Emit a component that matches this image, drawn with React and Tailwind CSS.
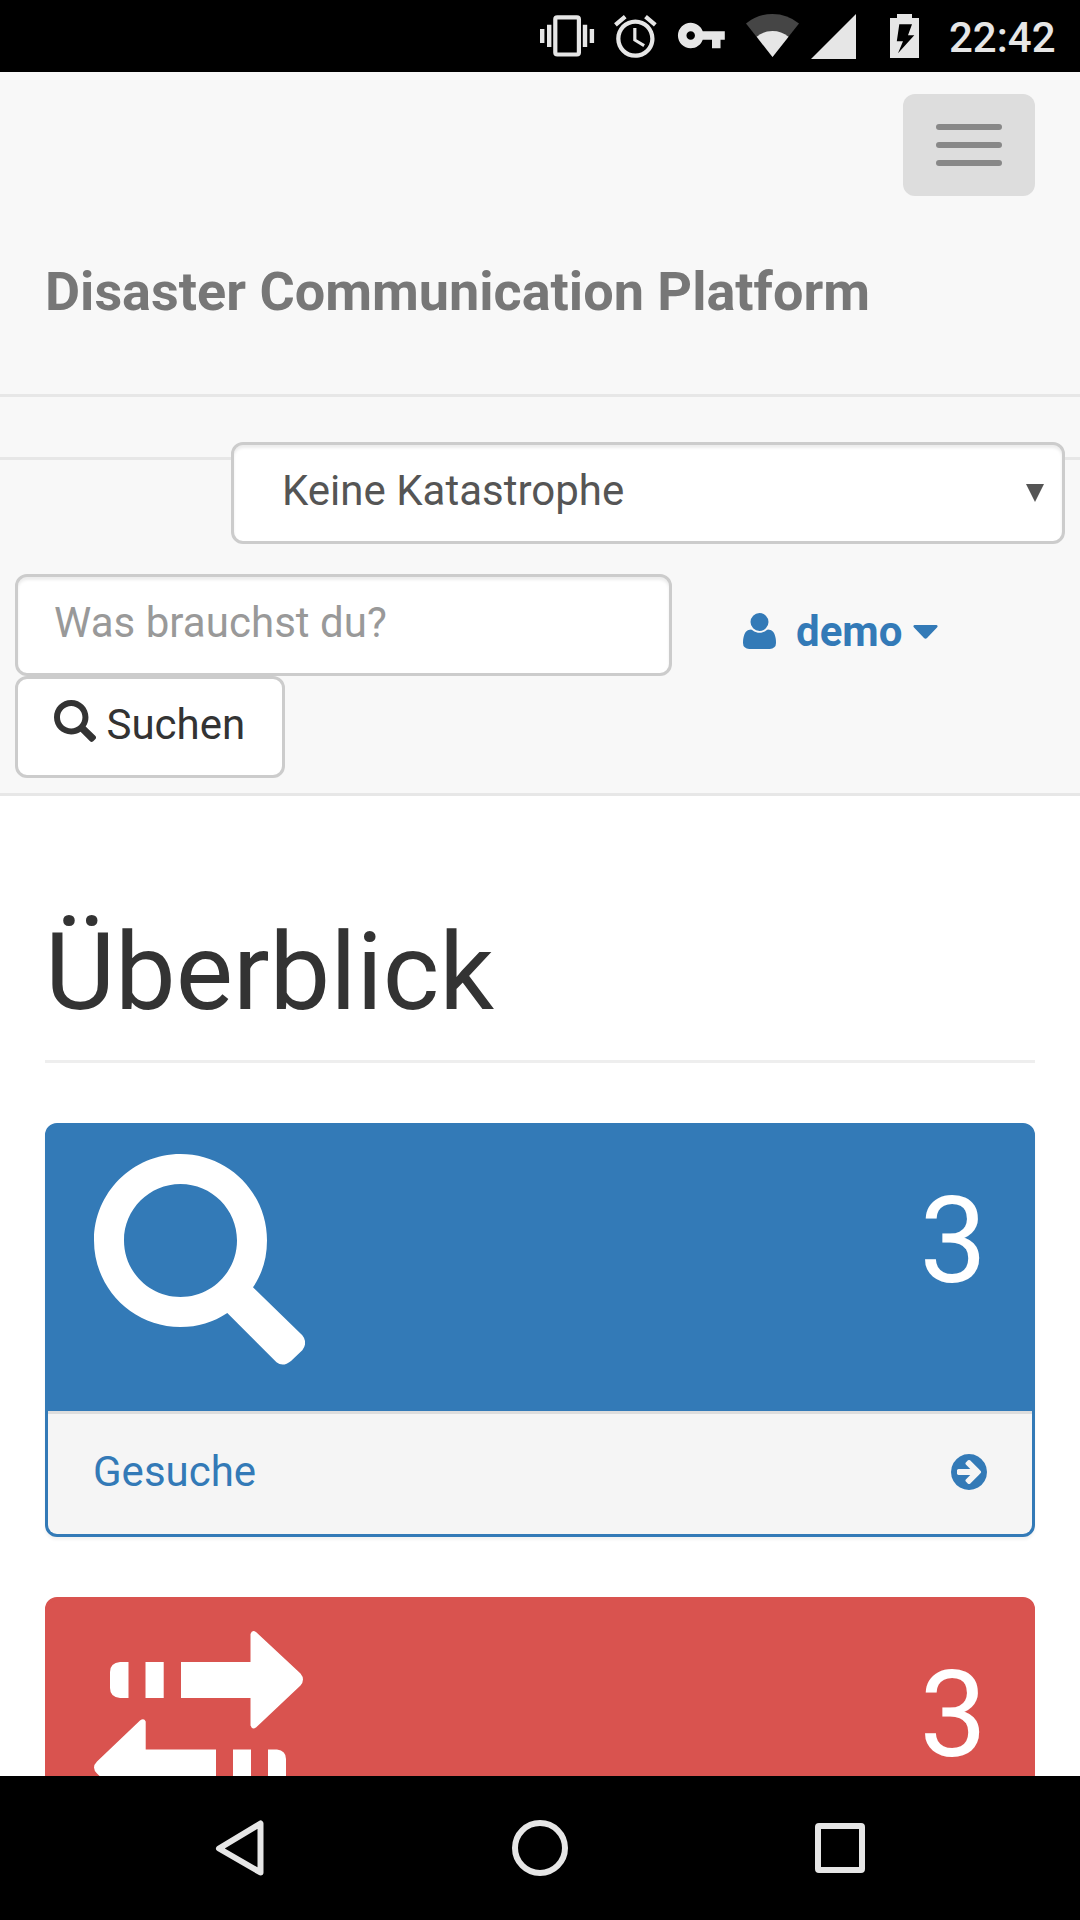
function StatusIcons() {
  return (
    <svg className="h-[72px] w-[400px] shrink-0" viewBox="530 0 400 72" fill="#e6e6e6" aria-hidden="true">
      <path d="M540 29h4.4v14H540zM547 24.7h4.4v22.4H547zM582.8 24.7h4.4v22.4h-4.4zM589.7 29h4.4v14h-4.4z" />
      <rect x="555.3" y="17.3" width="23.6" height="37.2" rx="2" fill="none" stroke="#e6e6e6" strokeWidth="4.2" />
      <g transform="translate(609.8 11) scale(2.13)">
        <path d="M22 5.72l-4.6-3.86-1.29 1.53 4.6 3.86L22 5.72zM7.88 3.39L6.6 1.86 2 5.71l1.29 1.53 4.59-3.85zM12.5 8H11v6l4.75 2.85.75-1.23-4-2.37V8zM12 4c-4.97 0-9 4.03-9 9s4.02 9 9 9c4.97 0 9-4.03 9-9s-4.03-9-9-9zm0 16c-3.87 0-7-3.13-7-7s3.13-7 7-7 7 3.13 7 7-3.13 7-7 7z" />
      </g>
      <g transform="translate(675.8 10) scale(2.13)">
        <path d="M12.65 10C11.83 7.67 9.61 6 7 6c-3.31 0-6 2.69-6 6s2.69 6 6 6c2.61 0 4.83-1.67 5.65-4H17v4h4v-4h2v-4H12.65zM7 14c-1.1 0-2-.9-2-2s.9-2 2-2 2 .9 2 2-.9 2-2 2z" />
      </g>
      <path d="M772.5 57L746 23.5Q757.5 14 772.5 14Q787.5 14 799 23.5Z" fill="#454545" />
      <path d="M772.5 57L756.7 36.8Q763.5 31 772.5 31Q781.5 31 788.5 36.8Z" />
      <path d="M856 14v45h-45z" />
      <path fillRule="evenodd" d="M897 14h15v4h7v40h-29V18h7zM899.3 24.3L896.8 41.3H903L898 53.3L914.3 35.3H908L912 24.3Z" />
    </svg>
  );
}

function SearchGlyph({ className }) {
  return (
    <svg className={className} viewBox="0 0 211 211" fill="currentColor" aria-hidden="true">
      <path
        fillRule="evenodd"
        d="M86.5 0C134.3 0 173 38.5 173 86.5C173 105 168 120 159 133.3L208.3 181.3Q214 188.5 208.3 196.3L197 207Q189 213.5 182.5 208.3L133.3 159C119 168.5 104 173 86.5 173C38.7 173 0 134.3 0 86.5C0 38.7 38.7 0 86.5 0ZM86.5 30C55.3 30 30 55.3 30 86.5C30 117.7 55.3 143 86.5 143C117.7 143 143 117.7 143 86.5C143 55.3 117.7 30 86.5 30Z"
      />
    </svg>
  );
}

function TransferGlyph({ className }) {
  return (
    <svg className={className} viewBox="0 0 210 185" fill="currentColor" aria-hidden="true">
      <path d="M34.5 31V67H26Q16 66 16 57V41Q16 32 26 31ZM51.5 31H69.7V67H51.5ZM87 31H156.5V3Q158 -1.5 162 1L206.5 42.5Q211.5 48.5 206.5 54.5L162 96.5Q158 99 156.5 94.5V67H87Z" />
      <path d="M174 118.5H183Q192 119.5 192 128V144Q192 153 183 154H174ZM139 118.5H157V154H139ZM122 118.5V154H51.7V182Q50 187 46 184L3 142.5Q-3 136.5 3 130.5L46 89.5Q50 86.5 51.7 90.5V118.5Z" />
    </svg>
  );
}

function ArrowCircle() {
  return (
    <svg className="mt-[-1px] h-[36px] w-[36px]" viewBox="128 128 1536 1536" fill="currentColor" aria-hidden="true">
      <path d="M1413 896q0-27-18-45l-91-91-362-362q-18-18-45-18t-45 18l-91 91q-18 18-18 45t18 45l189 189h-502q-26 0-45 19t-19 45v128q0 26 19 45t45 19h502l-189 189q-19 19-19 45t19 45l91 91q18 18 45 18t45-18l362-362 91-91q18-18 18-45zm251 0q0 209-103 385.5t-279.5 279.5-385.5 103-385.5-103-279.5-279.5-103-385.5 103-385.5 279.5-279.5 385.5-103 385.5 103 279.5 279.5 103 385.5z" />
    </svg>
  );
}

function UserGlyph() {
  return (
    <svg className="mt-[-2px] h-[36px] w-[33px]" viewBox="192 128 1408 1536" fill="currentColor" aria-hidden="true">
      <path d="M1600 1405q0 120-73 189.5t-194 69.5h-874q-121 0-194-69.5t-73-189.5q0-53 3.5-103.5t14-109 26.5-108.5 43-97.5 62-81 85.5-53.5 111.5-20q9 0 42 21.5t74.5 48 108 48 133.5 21.5 133.5-21.5 108-48 74.5-48 42-21.5q61 0 111.5 20t85.5 53.5 62 81 43 97.5 26.5 108.5 14 109 3.5 103.5zm-320-893q0 159-112.5 271.5t-271.5 112.5-271.5-112.5-112.5-271.5 112.5-271.5 271.5-112.5 271.5 112.5 112.5 271.5z" />
    </svg>
  );
}

function Navbar() {
  return (
    <nav className="h-[724px] shrink-0 border-b-[3px] border-[#e7e7e7] bg-[#f8f8f8]">
      <div className="flex h-[322px] flex-col px-[45px] pt-[22px]">
        <button className="flex h-[102px] w-[132px] flex-col items-center justify-center gap-[12px] self-end rounded-[12px] bg-[#ddd]">
          <span className="h-[6px] w-[66px] rounded-[3px] bg-[#888]" />
          <span className="h-[6px] w-[66px] rounded-[3px] bg-[#888]" />
          <span className="h-[6px] w-[66px] rounded-[3px] bg-[#888]" />
        </button>
        <a className="mt-[66px] text-[54px] leading-[60px] font-bold whitespace-nowrap text-[#777]">Disaster Communication Platform</a>
      </div>
      <div className="h-[66px] border-y-[3px] border-[#e7e7e7]" />
      <div className="relative mt-[-18px] px-[15px]">
        <div className="ml-auto flex h-[102px] w-[834px] items-center justify-between rounded-[12px] border-[3px] border-[#ccc] bg-white pr-[18px] pb-[5px] pl-[48px] text-[42px] leading-[60px] text-[#555] shadow-[inset_0_3px_3px_rgba(0,0,0,0.075)]">
          <span>Keine Katastrophe</span>
          <svg className="mt-[4px] h-[18px] w-[18px]" viewBox="0 0 18 18" fill="currentColor" aria-hidden="true">
            <path d="M0 0H18L9 18Z" />
          </svg>
        </div>
        <div className="mt-[30px] flex h-[102px]">
          <input
            className="w-[657px] rounded-[12px] border-[3px] border-[#ccc] bg-white pb-[5px] pl-[36px] text-[42px] leading-[60px] tracking-[0.05px] shadow-[inset_0_3px_3px_rgba(0,0,0,0.075)] placeholder:text-[#999]"
            placeholder="Was brauchst du?"
          />
          <a className="ml-[70.5px] flex items-center pt-[14px] text-[#337ab7]">
            <UserGlyph />
            <span className="ml-[20.5px] text-[42px] leading-[60px] font-bold">demo</span>
            <svg className="ml-[10.5px] h-[14px] w-[25px]" viewBox="0 0 25 14" fill="currentColor" aria-hidden="true">
              <path d="M1.5 0H23.5Q25.5 1 24 2.5L14 13Q12.5 14.5 11 13L1 2.5Q-.5 1 1.5 0Z" />
            </svg>
          </a>
        </div>
        <button className="flex h-[102px] w-[270px] items-center rounded-[12px] border-[3px] border-[#ccc] bg-white pb-[5px] pl-[36px] text-[#333]">
          <SearchGlyph className="mt-[-7px] h-[42px] w-[42px]" />
          <span className="ml-[10.5px] text-[42px] leading-[60px]">Suchen</span>
        </button>
      </div>
    </nav>
  );
}

function BlueCard() {
  return (
    <section className="mt-[60px] h-[414px] shrink-0 overflow-hidden rounded-[12px] border-[3px] border-[#337ab7] bg-[#337ab7] shadow-[0_3px_3px_rgba(0,0,0,0.05)]">
      <div className="flex h-[285px] justify-between pt-[28px] pr-[45px] pl-[46px] text-white">
        <SearchGlyph className="h-[211px] w-[211px]" />
        <span className="mt-[37px] text-[120px] leading-[100px]">3</span>
      </div>
      <div className="flex h-[123px] items-center justify-between border-t-[3px] border-[#ddd] bg-[#f5f5f5] px-[45px] pb-[4px] text-[#337ab7]">
        <a className="text-[42px] leading-[60px]">Gesuche</a>
        <ArrowCircle />
      </div>
    </section>
  );
}

function RedCard() {
  return (
    <section className="mt-[60px] h-[414px] shrink-0 overflow-hidden rounded-[12px] border-[3px] border-[#d9534f] bg-[#d9534f]">
      <div className="flex h-[285px] justify-between pt-[28px] pr-[45px] pl-[46px] text-white">
        <TransferGlyph className="mt-[3px] h-[185px] w-[210px]" />
        <span className="mt-[37px] text-[120px] leading-[100px]">3</span>
      </div>
    </section>
  );
}

export default function App() {
  return (
    <div className="flex h-[1920px] w-[1080px] flex-col overflow-hidden bg-white font-['Roboto',sans-serif]">
      <header className="flex h-[72px] shrink-0 items-center bg-black pl-[530px]">
        <StatusIcons />
        <span className="mt-[3px] ml-[19px] text-[42px] leading-[60px] font-medium text-[#e6e6e6]">22:42</span>
      </header>
      <div className="flex h-[1704px] shrink-0 flex-col overflow-hidden">
        <Navbar />
        <main className="flex flex-col px-[45px]">
          <h1 className="mt-[117px] h-[150px] shrink-0 border-b-[3px] border-[#eee] text-[108px] leading-[119px] text-[#333]">Überblick</h1>
          <BlueCard />
          <RedCard />
        </main>
      </div>
      <footer className="flex h-[144px] shrink-0 items-center justify-between bg-black px-[215px]">
        <svg className="h-[56px] w-[50px]" viewBox="0 0 50 56" fill="none" stroke="#e6e6e6" strokeWidth="6" strokeLinejoin="round" aria-hidden="true">
          <path d="M45.5 3.5V52.5L4 28.5Z" />
        </svg>
        <span className="h-[56px] w-[56px] rounded-full border-[6px] border-[#e6e6e6]" />
        <span className="h-[50px] w-[50px] rounded-[4px] border-[6px] border-[#e6e6e6]" />
      </footer>
    </div>
  );
}
